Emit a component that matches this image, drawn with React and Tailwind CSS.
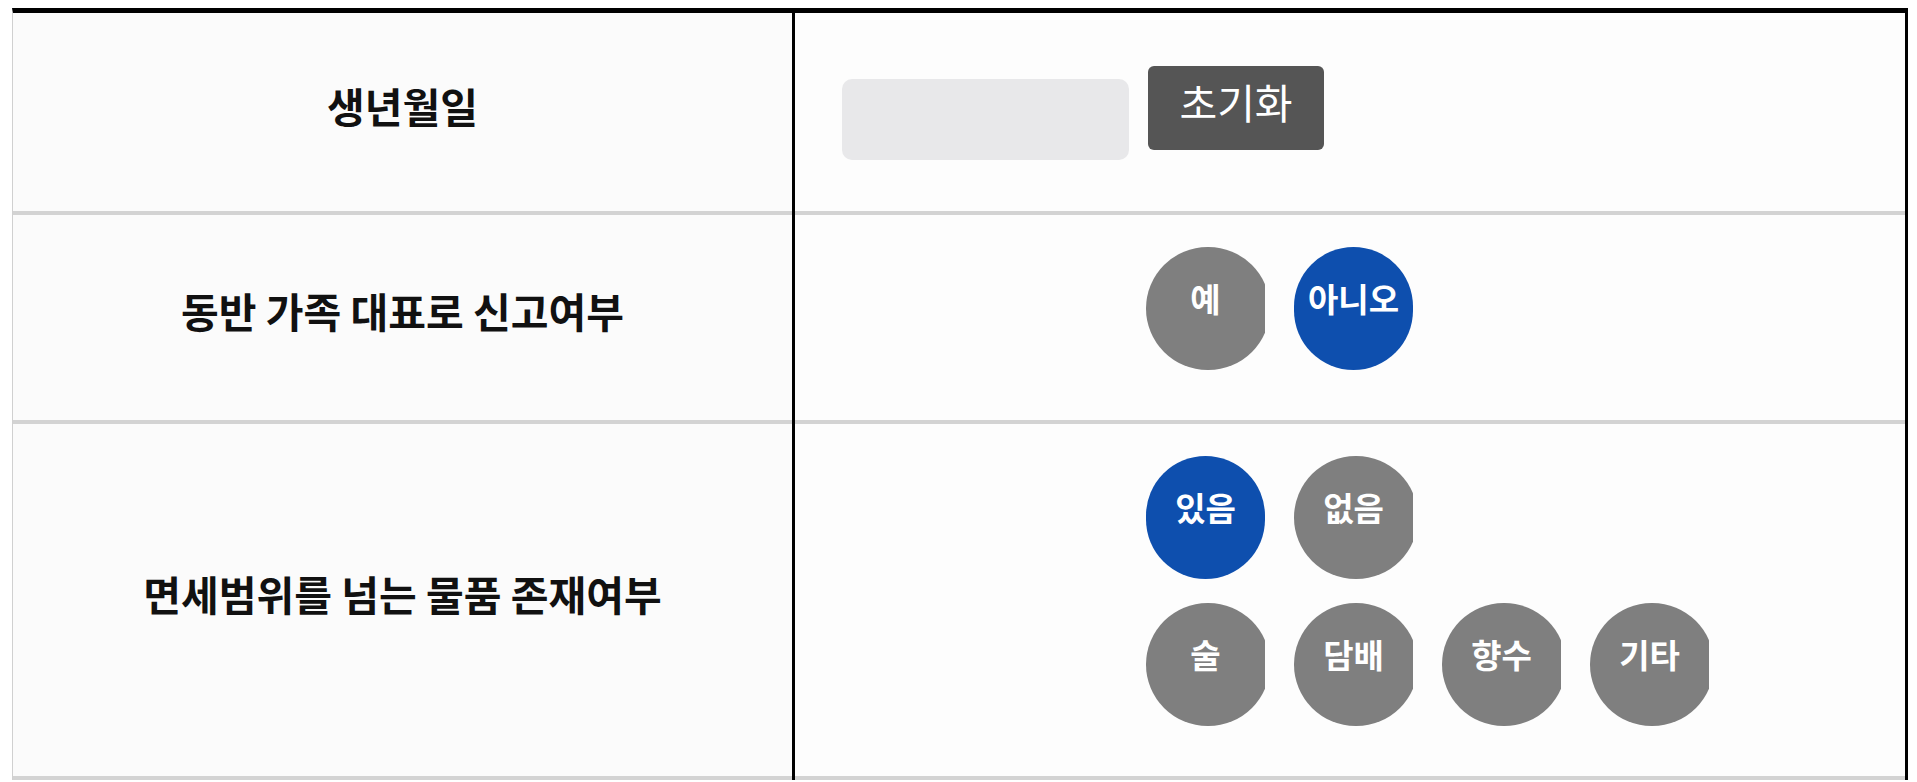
import React, { useState } from "react";

const Circle = ({ label, active, onClick }) => (
  <button
    type="button"
    onClick={onClick}
    className="w-[119px] h-[123px] overflow-hidden shrink-0 flex items-center"
  >
    {active ? (
      <span className="w-[119px] h-[123px] rounded-full bg-[#0e4fae] flex items-center justify-center text-white text-[33px] font-bold leading-none pb-[20px]">
        {label}
      </span>
    ) : (
      <span className="w-[124px] h-[123px] shrink-0 rounded-full bg-[#7f7f7f] flex items-center justify-center text-white text-[33px] font-bold leading-none pb-[20px] pr-[5px]">
        {label}
      </span>
    )}
  </button>
);

const Row = ({ label, height, children }) => (
  <div className="flex">
    <div
      className={`w-[779px] shrink-0 bg-[#fbfbfb] border-b-4 border-[#d3d3d3] flex items-center justify-center pb-[14px] ${height}`}
    >
      <span className="text-[41px] font-bold text-[#111] leading-none">{label}</span>
    </div>
    <div className="w-[3px] shrink-0 bg-black" />
    <div className="flex-1 bg-[#fdfdfd] border-b-4 border-[#d3d3d3]">{children}</div>
  </div>
);

export default function App() {
  const [family, setFamily] = useState("no");
  const [over, setOver] = useState("yes");
  const [birth, setBirth] = useState("");

  return (
    <div className="min-h-screen bg-white pt-[8px] pl-[12px] font-['Noto_Sans_CJK_KR','Noto_Sans',sans-serif]">
      <div className="w-[1896px] border-t-[5px] border-t-black border-r-[3px] border-r-black border-l border-l-[#d0d0d0]">
        <Row label="생년월일" height="h-[202px]">
          <div className="h-[198px] flex items-start pt-[53px] pl-[47px]">
            <input
              type="text"
              value={birth}
              onChange={(e) => setBirth(e.target.value)}
              className="mt-[13px] w-[287px] h-[81px] rounded-[10px] bg-[#e8e8ea] outline-none px-4 text-[28px]"
            />
            <button
              type="button"
              onClick={() => setBirth("")}
              className="ml-[19px] w-[176px] h-[84px] rounded-[6px] bg-[#555555] text-white text-[41px] leading-none pb-[14px]"
            >
              초기화
            </button>
          </div>
        </Row>

        <Row label="동반 가족 대표로 신고여부" height="h-[209px]">
          <div className="flex gap-[29px] pl-[351px] pt-[32px] pb-[50px]">
            <Circle label="예" active={family === "yes"} onClick={() => setFamily("yes")} />
            <Circle label="아니오" active={family === "no"} onClick={() => setFamily("no")} />
          </div>
        </Row>

        <Row label="면세범위를 넘는 물품 존재여부" height="h-[356px]">
          <div className="flex flex-col gap-[24px] pl-[351px] pt-[32px] pb-[50px]">
            <div className="flex gap-[29px]">
              <Circle label="있음" active={over === "yes"} onClick={() => setOver("yes")} />
              <Circle label="없음" active={over === "no"} onClick={() => setOver("no")} />
            </div>
            <div className="flex gap-[29px]">
              <Circle label="술" />
              <Circle label="담배" />
              <Circle label="향수" />
              <Circle label="기타" />
            </div>
          </div>
        </Row>
      </div>
    </div>
  );
}
